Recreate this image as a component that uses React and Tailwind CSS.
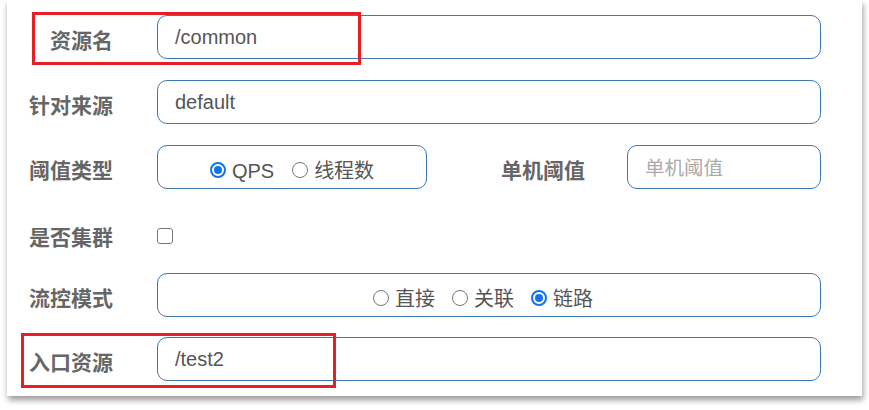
import React from "react";

const cjk = { fontFamily: '"Noto Sans CJK SC", "Liberation Sans", sans-serif' };
const latin = { fontFamily: '"Liberation Sans", "Noto Sans CJK SC", sans-serif' };

function Label({ children, className = "" }) {
  return (
    <div
      className={"text-right text-[21px] font-bold text-[#666] leading-none pt-[5px] " + className}
      style={cjk}
    >
      {children}
    </div>
  );
}

function Radio({ checked, label }) {
  return (
    <span className="flex items-center">
      {checked ? (
        <span className="w-[16px] h-[16px] rounded-full border-[2px] border-[#1173f2] flex items-center justify-center">
          <span className="w-[8px] h-[8px] rounded-full bg-[#1173f2]" />
        </span>
      ) : (
        <span className="w-[16px] h-[16px] rounded-full border-[1.5px] border-[#777]" />
      )}
      <span className="ml-[6px] text-[20px] text-[#555] leading-none pt-[2px]" style={latin}>
        {label}
      </span>
    </span>
  );
}

function Box({ className = "", children }) {
  return (
    <div
      className={
        "h-[44px] border border-[#3a78b6] rounded-[10px] flex items-center bg-white " + className
      }
    >
      {children}
    </div>
  );
}

export default function App() {
  return (
    <div className="w-[869px] h-[410px] bg-white overflow-hidden">
      <div className="relative ml-[7px] w-[855px] h-[396px] bg-white shadow-[1px_4px_6px_rgba(0,0,0,0.4)] pt-[15px] flex flex-col">
        {/* Row 1 */}
        <div className="flex items-center h-[44px]">
          <Label className="w-[106px]">资源名</Label>
          <Box className="ml-[44px] w-[664px] px-[17px]">
            <span className="text-[20px] text-[#555]" style={latin}>/common</span>
          </Box>
        </div>
        {/* Row 2 */}
        <div className="flex items-center h-[44px] mt-[21px]">
          <Label className="w-[106px]">针对来源</Label>
          <Box className="ml-[44px] w-[664px] px-[17px]">
            <span className="text-[20px] text-[#555]" style={latin}>default</span>
          </Box>
        </div>
        {/* Row 3 */}
        <div className="flex items-center h-[44px] mt-[21px]">
          <Label className="w-[106px]">阈值类型</Label>
          <Box className="ml-[44px] w-[270px] justify-center gap-[18px] pt-[5px]">
            <Radio checked label="QPS" />
            <Radio label="线程数" />
          </Box>
          <Label className="w-[158px]">单机阈值</Label>
          <Box className="ml-[42px] w-[194px] px-[17px]">
            <span className="text-[19.5px] text-[#aaa]" style={cjk}>单机阈值</span>
          </Box>
        </div>
        {/* Row 4 */}
        <div className="flex items-center h-[42px] mt-[24px]">
          <Label className="w-[106px]">是否集群</Label>
          <div className="ml-[44px] mt-[3px] w-[16px] h-[16px] rounded-[3px] border border-[#777] bg-white" />
        </div>
        {/* Row 5 */}
        <div className="flex items-center h-[44px] mt-[18px]">
          <Label className="w-[106px]">流控模式</Label>
          <Box className="ml-[44px] w-[664px] justify-center gap-[17px] pr-[12px] pt-[5px]">
            <Radio label="直接" />
            <Radio label="关联" />
            <Radio checked label="链路" />
          </Box>
        </div>
        {/* Row 6 */}
        <div className="flex items-center h-[44px] mt-[20px]">
          <Label className="w-[106px]">入口资源</Label>
          <Box className="ml-[44px] w-[664px] px-[17px]">
            <span className="text-[20px] text-[#555]" style={latin}>/test2</span>
          </Box>
        </div>

        {/* Red highlight boxes */}
        <div className="absolute left-[25px] top-[12px] w-[329px] h-[53px] border-[3px] border-[#e41f26] pointer-events-none" />
        <div className="absolute left-[14px] top-[333px] w-[315px] h-[55px] border-[3px] border-[#e41f26] pointer-events-none" />
      </div>
    </div>
  );
}
